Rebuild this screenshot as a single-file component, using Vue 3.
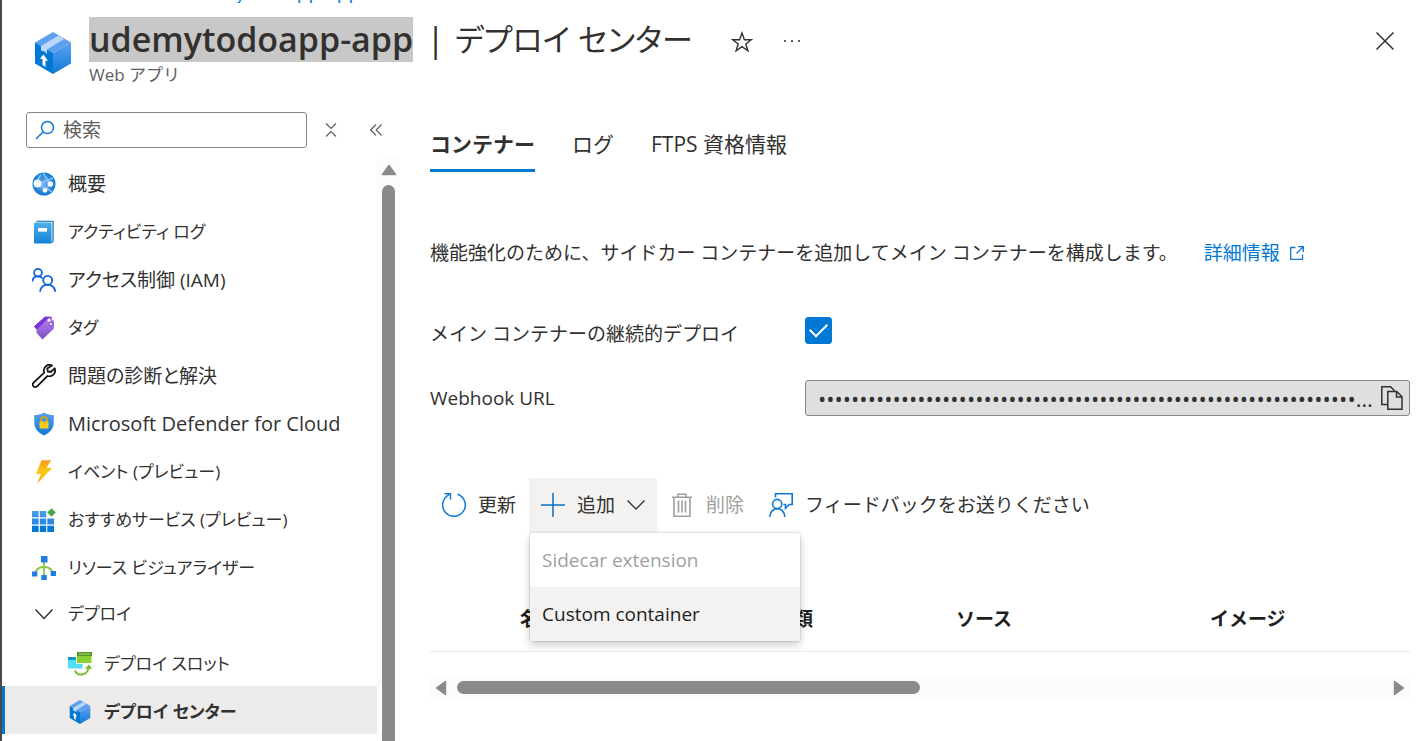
<script setup>
import { ref } from 'vue'

const box =
  '<path d="M18 0 36 10.5 18 21 0 10.5z" fill="#5ea0ef"/><path d="M36 10.5v21L18 42V21z" fill="url(#boxSide)"/><path d="M0 10.5 18 21v21L0 31.5z" fill="#0078d4"/><path d="M6 14 23.500 3.500 29 7 12 17.500V22l-2.500-2.500L6 18.500z" fill="#b9d8fa"/><path d="M8.500 22.500 13 29l-2.500-.500v6.500L7.500 33v-6L5 26.500z" fill="#fff"/>'

const icons = {
  globe:
    '<circle cx="12" cy="12" r="11.500" fill="url(#globe)"/><path d="M3 12 9 2.500M5 10 20 20M7 12 21 6M18 12 11 1" stroke="#8dc4f8" stroke-width="1.500" fill="none"/><path d="M5 12 13 18.500 18 12" stroke="#8dc4f8" stroke-width="1.200" fill="none"/><circle cx="5.500" cy="11.500" r="4" fill="#f4f6f8"/><circle cx="18.300" cy="12" r="2.800" fill="#f4f6f8"/><circle cx="13" cy="18.300" r="2.400" fill="#f4f6f8"/>',
  book:
    '<path d="M4.500.800h16a1.200 1.200 0 0 1 1.200 1.200v19.500l-1.500 1.500H4z" fill="#0f6cb4"/><path d="M4 1.800h16.500v20H4z" fill="#e6f1fa"/><rect x="2" y="2.500" width="17.500" height="21" rx="1.200" fill="url(#book)"/><rect x="6" y="8" width="9" height="3.600" fill="#fff"/>',
  people:
    '<g fill="none" stroke="#0f62dc" stroke-width="1.800"><circle cx="6" cy="4.800" r="3.900"/><path d="M.500 13.500C.500 8 7.500 6.500 10.500 10.500"/><circle cx="15.700" cy="12.300" r="4.500"/><path d="M8 23.800c.200-9.500 15-9.500 15.200 0"/></g>',
  tag:
    '<path d="M2 10.500 13 .800l6 .200v6L6 15z" fill="#7232d0"/><path d="M4.500 13.500 14.500 4h6.500l1 1v7.500L10.500 23.500 4.500 17z" fill="url(#tag)"/><path d="M2 10.500 13 .800h6.500l.300 3-6 .700L5.500 13z" fill="#7a35d6"/><circle cx="17" cy="4" r="1.700" fill="#fff"/><circle cx="18.800" cy="8" r="1.900" fill="#e8dbf8" stroke="#7a4ab8"/>',
  wrench:
    '<path d="M20 1.500c-2-1-5-.600-6.700 1.300-1.500 1.700-1.800 3.900-1 5.900L1.700 18.500c-1.200 1.200-1.200 2.800-.200 3.800s2.700 1 3.800-.200L15.500 12c2 .700 4.300.200 5.900-1.400 1.800-1.800 2.100-4.200 1.300-6.300L18.800 8l-3-.500-.500-3z" fill="none" stroke="#1b1a19" stroke-width="1.800" stroke-linejoin="round"/>',
  shield:
    '<path d="M12 .500c3.500 2.500 6.500 2.300 9.700 2.500V11c0 6.500-5 10-9.700 12.500C7.300 21 2.300 17.500 2.300 11V3C5.500 2.800 8.500 3 12 .500z" fill="url(#shield)"/><path d="M9 10V8c0-4 6-4 6 0v2" fill="none" stroke="#e8a70c" stroke-width="1.700"/><rect x="7.500" y="9.500" width="9" height="7" rx="1" fill="#fbc916"/>',
  bolt: '<path d="M9.500.300h9.500L14.500 8H20L5 23.700 9 14H4z" fill="url(#bolt)"/>',
  grid:
    '<g fill="url(#gridFill)"><rect y="3" width="6.600" height="6.300"/><rect x="7.800" y="3" width="6.400" height="6.300"/></g><path d="M0 10.500h6.600v6H0zM7.800 10.500h6.400v6H7.800zM15.300 10.500H22v6h-6.700z" fill="#2a8be0"/><path d="M0 17.700h6.600V24H0zM7.800 17.700h6.400V24H7.800zM15.300 17.700H22V24h-6.700z" fill="#0078d4"/><path d="m19.500.300 4.300 4.200-4.300 4.200-4.300-4.200z" fill="#4aa644"/>',
  tree:
    '<path d="M12 6v14M3.500 17c1-6 7-6 8.500-6s7.500 0 8.500 6" fill="none" stroke="#86c440" stroke-width="1.800"/><g fill="#1f7fe0"><rect x="9" y="0" width="6.500" height="6.500"/><rect x="0" y="15.500" width="5.300" height="5"/><rect x="18.700" y="15" width="5.300" height="5"/><rect x="9.300" y="19" width="5.500" height="5"/></g>',
  slots:
    '<rect y="5" width="14.500" height="11.500" fill="#50dff5"/><path d="M0 5h14.500v3H0z" fill="#1795b8"/><rect x="8.500" width="15.500" height="11.500" fill="#86d02f" stroke="#fff" stroke-width="1"/><path d="M9 0h15v4H9z" fill="#57951d"/><path d="M11 2h11" stroke="#b6dc8a"/><path d="M7 18.500c2 6 12.500 5.500 13.500-3" fill="none" stroke="#76bc2d" stroke-width="2"/><path d="m17 16.500 4-4 3 4.500z" fill="#76bc2d"/>'
}

const navItems = [
  { label: '概要', icon: 'globe' },
  { label: 'アクティビティ ログ', icon: 'book', script: 'kana' },
  { label: 'アクセス制御 (IAM)', icon: 'people' },
  { label: 'タグ', icon: 'tag', script: 'kana' },
  { label: '問題の診断と解決', icon: 'wrench' },
  { label: 'Microsoft Defender for Cloud', icon: 'shield', script: 'latin' },
  { label: 'イベント (プレビュー)', icon: 'bolt', script: 'kana' },
  { label: 'おすすめサービス (プレビュー)', icon: 'grid', script: 'kana' },
  { label: 'リソース ビジュアライザー', icon: 'tree', script: 'kana' }
]

const tabs = ['コンテナー', 'ログ', 'FTPS 資格情報']
const activeTab = ref(0)
const search = ref('')
const continuous = ref(true)
const webhook = ref('x'.repeat(96))
</script>

<template>
  <div class="blade">
    <svg class="defs" aria-hidden="true">
      <defs>
        <linearGradient id="boxSide" x1="0" y1="0" x2="0" y2="1"><stop offset="0" stop-color="#5ea0ef" /><stop offset="1" stop-color="#0f7bd8" /></linearGradient>
        <radialGradient id="globe"><stop offset="0" stop-color="#6ab0f5" /><stop offset="1" stop-color="#0f78d4" /></radialGradient>
        <linearGradient id="book" x1="0" y1="0" x2="0" y2="1"><stop offset="0" stop-color="#4fb0e8" /><stop offset="1" stop-color="#1382d8" /></linearGradient>
        <linearGradient id="tag" x1="0" y1="0" x2="0" y2="1"><stop offset="0" stop-color="#b77af4" /><stop offset="1" stop-color="#7a4fc0" /></linearGradient>
        <linearGradient id="shield" x1="0" y1="0" x2="0" y2="1"><stop offset="0" stop-color="#5a9fee" /><stop offset="1" stop-color="#0f78d4" /></linearGradient>
        <linearGradient id="bolt" x1="0" y1="0" x2="0" y2="1"><stop offset="0" stop-color="#fa9a1c" /><stop offset="0.500" stop-color="#fecb12" /><stop offset="1" stop-color="#fa9f1c" /></linearGradient>
        <linearGradient id="gridFill" x1="0" y1="0" x2="0" y2="1"><stop offset="0" stop-color="#4a9fe8" /><stop offset="1" stop-color="#3a94e4" /></linearGradient>
      </defs>
    </svg>

    <nav class="crumbs" aria-label="階層リンク"><a href="#">udemytodoapp-app</a></nav>

    <header class="head">
      <svg class="head-icon" viewBox="0 0 36 42" aria-hidden="true" v-html="box"></svg>
      <div class="head-text">
        <h1 class="title"><mark>udemytodoapp-app</mark><span class="bar">|</span><span class="page">デプロイ センター</span></h1>
        <p class="kind">Web アプリ</p>
      </div>
      <button class="plain star" aria-label="お気に入り">
        <svg width="22" height="22" viewBox="0 0 22 22"><path d="m11 2 2.400 6.700h7L14.800 13l2.100 6.800L11 15.700l-5.900 4.100L7.200 13 1.600 8.700h7z" fill="none" stroke="#323130" stroke-width="1.400" /></svg>
      </button>
      <button class="plain more" aria-label="その他">
        <svg width="18" height="4" viewBox="0 0 18 4"><path d="M1 1h2v2H1zM8 1h2v2H8zM15 1h2v2h-2z" fill="#605e5c" /></svg>
      </button>
      <button class="plain close" aria-label="閉じる">
        <svg width="18" height="18" viewBox="0 0 18 18"><path d="m.500.500 17 17m0-17-17 17" stroke="#323130" stroke-width="1.500" /></svg>
      </button>
    </header>

    <div class="body">
      <aside class="side">
        <div class="search-row">
          <label class="search">
            <svg width="20" height="20" viewBox="0 0 20 20" aria-hidden="true"><g fill="none" stroke="#0f78d4" stroke-width="1.500"><circle cx="12.500" cy="7.500" r="6" /><path d="M8.200 11.800 1 19" /></g></svg>
            <input v-model="search" type="text" placeholder="検索" aria-label="検索" />
          </label>
          <button class="plain fold" aria-label="すべて折りたたむ">
            <svg width="12" height="14" viewBox="0 0 12 14"><path d="m1 .500 5 5 5-5M1 13.500l5-5 5 5" fill="none" stroke="#605e5c" stroke-width="1.200" /></svg>
          </button>
          <button class="plain collapse" aria-label="メニューを折りたたむ">
            <svg width="12" height="12" viewBox="0 0 12 12"><path d="M6 .500.700 6 6 11.500M11.500.500 6.200 6l5.300 5.500" fill="none" stroke="#605e5c" stroke-width="1.200" /></svg>
          </button>
        </div>
        <div class="side-scroll">
          <nav class="nav" aria-label="リソース メニュー">
            <a v-for="item in navItems" :key="item.label" href="#" class="nav-item" :class="item.script">
              <svg width="24" height="24" viewBox="0 0 24 24" aria-hidden="true" v-html="icons[item.icon]"></svg>
              {{ item.label }}
            </a>
            <button class="nav-item group kana" aria-expanded="true">
              <svg width="24" height="24" viewBox="0 0 24 24" aria-hidden="true"><path d="m3.500 7.500 8.500 9 8.500-9" fill="none" stroke="#323130" stroke-width="1.400" /></svg>
              デプロイ
            </button>
            <a href="#" class="nav-item sub kana">
              <svg width="24" height="24" viewBox="0 0 24 24" aria-hidden="true" v-html="icons.slots"></svg>
              デプロイ スロット
            </a>
            <a href="#" class="nav-item sub kana selected" aria-current="page">
              <svg width="24" height="24" viewBox="0 0 36 42" aria-hidden="true" v-html="box"></svg>
              デプロイ センター
            </a>
          </nav>
          <div class="vbar" aria-hidden="true">
            <svg width="16" height="12" viewBox="0 0 16 12"><path d="M8 1.500 14.500 10.500h-13z" fill="#8a8a8a" stroke="#8a8a8a" stroke-width="1.500" stroke-linejoin="round" /></svg>
            <div class="vthumb"></div>
          </div>
        </div>
      </aside>

      <main class="main">
        <div class="tabs" role="tablist">
          <button
            v-for="(tab, i) in tabs"
            :key="tab"
            role="tab"
            class="tab"
            :class="{ active: i === activeTab }"
            :aria-selected="i === activeTab"
            @click="activeTab = i"
          >{{ tab }}</button>
        </div>

        <p class="intro">
          <span>機能強化のために、サイドカー コンテナーを追加してメイン コンテナーを構成します。</span>
          <a href="#">詳細情報<svg width="14" height="14" viewBox="0 0 14 14" aria-hidden="true"><path d="M5.500 1.500H.700v11.800h11.800V8.500M8 .700h5.300V6M13 1 6.500 7.500" fill="none" stroke="#0f78d4" stroke-width="1.300" /></svg></a>
        </p>

        <div class="field">
          <label for="continuous">メイン コンテナーの継続的デプロイ</label>
          <input id="continuous" v-model="continuous" class="check" type="checkbox" />
        </div>
        <div class="field">
          <label for="webhook">Webhook URL</label>
          <div class="secret">
            <input id="webhook" :value="webhook" type="password" readonly />
            <button class="plain" aria-label="コピー">
              <svg width="22" height="24" viewBox="0 0 22 24"><g fill="none" stroke="#323130" stroke-width="1.500"><path d="M6.500 18.500H.800V.800h8.700l4.200 4" /><path d="M6.800 5.500h9l5.200 5.300v12.400H6.800zM15.500 5.500v5.500H21" /></g></svg>
            </button>
          </div>
        </div>

        <div class="toolbar">
          <button class="tool">
            <svg width="24" height="24" viewBox="0 0 24 24" aria-hidden="true"><path d="M15.500 1.200A11.300 11.300 0 1 1 7 1.800M2.500.700h6V6.500" fill="none" stroke="#0f78d4" stroke-width="1.500" /></svg>
            更新
          </button>
          <div class="menu-wrap">
            <button class="tool open" aria-haspopup="menu" aria-expanded="true">
              <svg width="24" height="24" viewBox="0 0 24 24" aria-hidden="true"><path d="M12 0v24M0 12h24" stroke="#0f6cbd" stroke-width="1.500" /></svg>
              追加
              <svg width="18" height="10" viewBox="0 0 18 10" aria-hidden="true"><path d="m.500.500 8.500 8.500 8.500-8.500" fill="none" stroke="#323130" stroke-width="1.400" /></svg>
            </button>
            <div class="menu" role="menu">
              <button role="menuitem" disabled>Sidecar extension</button>
              <button role="menuitem" class="hover">Custom container</button>
            </div>
          </div>
          <button class="tool" disabled>
            <svg width="24" height="24" viewBox="0 0 24 24" aria-hidden="true"><g fill="none" stroke="#a19f9d" stroke-width="1.600"><path d="M2 4.300h20M8 4V1.200h8V4M4 4.500v18.700h16V4.500M8.500 7.500v12M12 7.500v12M15.500 7.500v12" /></g></svg>
            削除
          </button>
          <button class="tool">
            <svg width="24" height="24" viewBox="0 0 24 24" aria-hidden="true"><g fill="none" stroke="#0f78d4" stroke-width="1.600"><path d="M6.500 4.500V.800h16.700v10.700h-3l-3.700 3.700v-3.700h-2" /><circle cx="8.200" cy="11" r="4.600" /><path d="M.800 24c0-11 15-11 15 0" /></g></svg>
            フィードバックをお送りください
          </button>
        </div>

        <table class="grid">
          <thead>
            <tr>
              <td class="c-check"></td>
              <th class="c-name" scope="col">名前</th>
              <th class="c-type" scope="col">種類</th>
              <th class="c-source" scope="col">ソース</th>
              <th scope="col">イメージ</th>
            </tr>
          </thead>
        </table>

        <div class="hbar" aria-hidden="true">
          <svg width="12" height="16" viewBox="0 0 12 16"><path d="M1.500 8 10.500 1.500v13z" fill="#8a8a8a" stroke="#8a8a8a" stroke-width="1.500" stroke-linejoin="round" /></svg>
          <div class="hrail"><div class="hthumb"></div></div>
          <svg width="12" height="16" viewBox="0 0 12 16"><path d="M10.500 8 1.500 1.500v13z" fill="#8a8a8a" stroke="#8a8a8a" stroke-width="1.500" stroke-linejoin="round" /></svg>
        </div>
      </main>
    </div>
  </div>
</template>

<style>
body {
  margin: 0;
  background: #fff;
}
</style>

<style scoped>
* {
  box-sizing: border-box;
}
.blade {
  display: flex;
  flex-direction: column;
  height: 100vh;
  overflow: hidden;
  border-left: 2px solid #4a4a4a;
  background: #fff;
  color: #323130;
  font-family: "Open Sans", "Noto Sans CJK JP", sans-serif;
  font-size: 19px;
  line-height: 28px;
}
.defs {
  position: absolute;
  width: 0;
  height: 0;
}
button,
input {
  font: inherit;
  color: inherit;
}
button {
  border: 0;
  background: none;
  padding: 0;
}
a {
  color: #0078d4;
  text-decoration: none;
}
svg {
  flex: none;
}
.plain {
  display: flex;
}
.crumbs {
  display: flex;
  align-items: flex-end;
  flex: none;
  height: 3px;
  padding-left: 182px;
  overflow: hidden;
  line-height: 20px;
}
.head {
  display: flex;
  align-items: flex-start;
  flex: none;
  height: 109px;
  padding: 14px 26px 0 32px;
}
.head-icon {
  width: 38px;
  height: 42px;
  margin-top: 15px;
}
.head-text {
  margin-left: 17px;
}
.title {
  display: flex;
  align-items: center;
  margin: 0;
  font-size: 34px;
  font-weight: 400;
  line-height: 45px;
}
.title mark {
  background: #c8c8c8;
  color: #323130;
  font-weight: 600;
}
.bar {
  margin: 0 10px 0 13px;
}
.page {
  font-feature-settings: "palt";
  font-size: 31px;
}
.kind {
  margin: 0;
  color: #605e5c;
  font-size: 17px;
  line-height: 26px;
}
.star {
  margin: 14px 0 0 38px;
}
.more {
  margin: 22px 0 0 30px;
}
.close {
  margin: 15px 0 0 auto;
}
.body {
  display: flex;
  flex: 1;
  min-height: 0;
}
.side {
  display: flex;
  flex-direction: column;
  flex: none;
  width: 398px;
}
.search-row {
  display: flex;
  align-items: center;
  padding: 0 18px 0 24px;
}
.fold {
  margin-left: 18px;
}
.collapse {
  margin-left: 33px;
}
.search {
  display: flex;
  align-items: center;
  gap: 8px;
  width: 281px;
  height: 36px;
  padding: 0 8px;
  border: 1px solid #8a8886;
  border-radius: 3px;
}
.search input {
  flex: 1;
  min-width: 0;
  padding: 0;
  border: 0;
  outline: 0;
  background: none;
}
.search input::placeholder {
  color: #605e5c;
  opacity: 1;
}
.side-scroll {
  display: flex;
  flex: 1;
  min-height: 0;
  padding-top: 10px;
  overflow: hidden;
}
.nav {
  flex: 1;
  min-width: 0;
}
.nav-item {
  display: flex;
  align-items: center;
  gap: 12px;
  width: 100%;
  height: 48px;
  padding: 4px 0 0 30px;
  color: #323130;
  font-feature-settings: "palt";
  white-space: nowrap;
}
.nav-item.kana {
  font-size: 17px;
}
.nav-item.latin {
  font-size: 20px;
}
.nav-item.group {
  padding-top: 0;
}
.nav-item.sub {
  padding-left: 66px;
}
.nav-item.selected {
  padding-left: 63px;
  border-left: 3px solid #0078d4;
  background: #edebe9;
  font-weight: 600;
}
.vbar {
  display: flex;
  flex-direction: column;
  align-items: center;
  gap: 9px;
  width: 23px;
  padding-top: 6px;
  background: #fcfcfc;
}
.vthumb {
  flex: 1;
  width: 13px;
  border-radius: 7px 7px 0 0;
  background: #8a8a8a;
}
.main {
  flex: 1;
  min-width: 0;
  padding: 12px 10px 0 30px;
}
.tabs {
  display: flex;
  gap: 37px;
  font-size: 21px;
}
.tab {
  height: 48px;
  padding-bottom: 6px;
  border-bottom: 3px solid transparent;
}
.tab.active {
  border-color: #0078d4;
  font-weight: 700;
}
.intro {
  display: flex;
  gap: 26px;
  margin: 67px 0 35px;
}
.intro a {
  display: flex;
  align-items: center;
  gap: 10px;
}
.field {
  display: grid;
  grid-template-columns: 375px 1fr;
  align-items: center;
  height: 64px;
}
.check {
  appearance: none;
  display: grid;
  place-items: center;
  width: 27px;
  height: 27px;
  margin: 0 0 8px;
  border: 1px solid #0078d4;
  border-radius: 3px;
}
.check:checked {
  background: #0078d4;
}
.check:checked::after {
  content: "";
  width: 15px;
  height: 8px;
  margin-bottom: 5px;
  border: solid #fff;
  border-width: 0 0 2px 2px;
  transform: rotate(-45deg);
}
.secret {
  display: flex;
  align-items: center;
  gap: 4px;
  height: 36px;
  padding: 0 6px 0 12px;
  border: 1px solid #8a8886;
  border-radius: 3px;
  background: #dfdfdf;
}
.secret input {
  flex: 1;
  min-width: 0;
  padding: 0;
  border: 0;
  outline: 0;
  background: none;
  font-size: 22px;
  text-overflow: ellipsis;
}
.toolbar {
  display: flex;
  gap: 1px;
  margin-top: 48px;
}
.tool {
  display: flex;
  align-items: center;
  gap: 12px;
  height: 54px;
  padding: 0 12px;
  white-space: nowrap;
}
.tool:disabled {
  color: #a19f9d;
}
.tool.open {
  background: #f3f2f1;
}
.menu-wrap {
  position: relative;
}
.menu {
  position: absolute;
  z-index: 1;
  top: 55px;
  left: 1px;
  width: 270px;
  border-radius: 2px;
  background: #fff;
  box-shadow: 0 0 2px rgba(0, 0, 0, 0.3), 0 4px 10px rgba(0, 0, 0, 0.2);
}
.menu button {
  display: block;
  width: 100%;
  height: 54px;
  padding: 0 12px;
  text-align: left;
}
.menu button:disabled {
  color: #a19f9d;
}
.menu .hover {
  background: #f3f2f1;
  color: #201f1e;
}
.grid {
  width: 100%;
  margin-top: 54px;
  border-bottom: 1px solid #edebe9;
  border-spacing: 0;
  table-layout: fixed;
}
.grid th,
.grid td {
  height: 65px;
  padding: 0;
  color: #201f1e;
  font-weight: 700;
  text-align: left;
}
.c-check {
  width: 90px;
}
.c-name {
  width: 255px;
}
.c-type {
  width: 181px;
}
.c-source {
  width: 254px;
}
.hbar {
  display: flex;
  align-items: center;
  gap: 10px;
  height: 23px;
  margin-top: 24px;
  padding: 0 5px;
  background: #fcfcfc;
}
.hrail {
  flex: 1;
}
.hthumb {
  width: 50%;
  height: 13px;
  border-radius: 7px;
  background: #8a8a8a;
}
</style>
